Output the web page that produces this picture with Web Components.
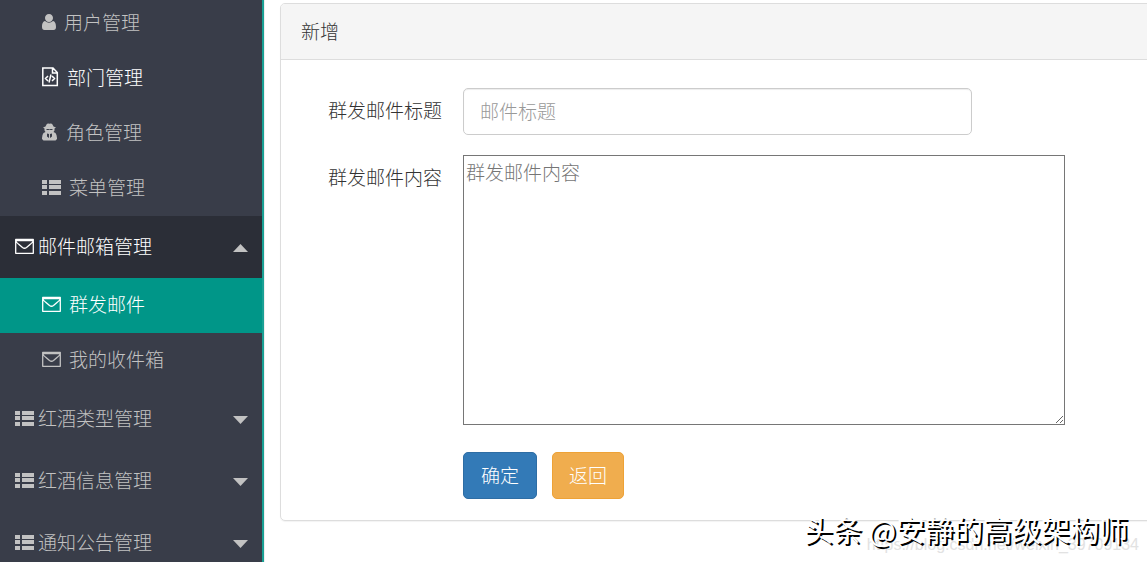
<!DOCTYPE html>
<html lang="zh-CN">
<head>
<meta charset="utf-8">
<title>群发邮件 - 新增</title>
<style>
html, body { margin: 0; height: 100%; }
body { overflow: hidden; background: #fff; color: #333; font: 300 19px/28px "Noto Sans CJK SC", "Liberation Sans", sans-serif; }
</style>
</head>
<body>
<admin-layout>
  <side-nav slot="nav">
    <nav-item icon="user" level="2">用户管理</nav-item>
    <nav-item icon="code" level="2" class="hover">部门管理</nav-item>
    <nav-item icon="secret" level="2">角色管理</nav-item>
    <nav-item icon="list" level="2">菜单管理</nav-item>
    <nav-item icon="mail" arrow="up" class="open">邮件邮箱管理</nav-item>
    <nav-item icon="mail" level="2" class="active">群发邮件</nav-item>
    <nav-item icon="mail" level="2">我的收件箱</nav-item>
    <nav-item icon="list" arrow="down">红酒类型管理</nav-item>
    <nav-item icon="list" arrow="down">红酒信息管理</nav-item>
    <nav-item icon="list" arrow="down">通知公告管理</nav-item>
  </side-nav>
  <panel-card>
    <span slot="title">新增</span>
    <mail-form></mail-form>
  </panel-card>
  <page-mark slot="mark"><span slot="url">https://blog.csdn.net/weixin_39709134</span>头条 @安静的高级架构师</page-mark>
</admin-layout>
<script>
const define = (name, html, setup) => customElements.define(name, class extends HTMLElement {
  constructor() {
    super();
    this.attachShadow({ mode: 'open' }).innerHTML = html;
  }
  connectedCallback() { if (setup) setup(this, this.shadowRoot); }
});

define('admin-layout', `
<style>
:host { display: flex; position: relative; height: 100vh; overflow: hidden; }
aside { flex: none; width: 262px; background: #393d49; border-right: 2px solid #1aa094; overflow: hidden; }
main { flex: 1; min-width: 0; box-sizing: border-box; padding: 3px 0 0 15px; border-left: 1px solid #eee; }
</style>
<aside><slot name="nav"></slot></aside>
<main><slot></slot></main>
<slot name="mark"></slot>`);

define('side-nav', `
<style>
:host { display: block; }
nav { display: flex; flex-direction: column; margin-top: -4px; }
</style>
<nav><slot></slot></nav>`);

const icons = {
  user: [14, 18, '<path fill="currentColor" d="M7 1C9.500 1 11 2.800 11 5C11 7.200 9.400 9 7 9C4.600 9 3 7.200 3 5C3 2.800 4.500 1 7 1ZM3 8Q7 11.500 11 8C13.400 8.500 14 11.300 14 14Q14 17 11.500 17H2.500Q0 17 0 14C0 11.300 .6 8.500 3 8Z"/>'],
  code: [17, 20, '<path fill="none" stroke="currentColor" stroke-width="1.500" d="M.8 1H11L15.300 5.500V18.500H.8ZM10.500 1V6H15.300M6 9L3.500 11.500L6 14M10 9L12.500 11.500L10 14M9 7.500L7 15.500"/>'],
  secret: [16, 18, '<path fill="currentColor" fill-rule="evenodd" d="M3.500 3.500L4.500 1.500Q5.500 0 7.500 .8Q9.500 0 10.500 1.500L11.500 3.500L14 4.500L12.500 5.500V7.500L11.500 9L13.500 10Q15 12 15 15V16L13.500 17.500H1.500L0 16V15Q0 12 1.500 10L3.500 9L2.500 7.500V5.500L1 4.500ZM4.500 6V7H6.500L7.500 6.500L8.500 7H10.500V6ZM5 10.500V13.500L7 15V11ZM8 11V15L10 13.500V10.500Z"/>'],
  list: [19, 16, '<path fill="currentColor" d="M0 1H5V5H0ZM7 1H19V5H7ZM0 6H5V10H0ZM7 6H19V10H7ZM0 12H5V16H0ZM7 12H19V16H7Z"/>'],
  mail: [19, 16, '<path fill="none" stroke="currentColor" stroke-width="1.300" stroke-linejoin="round" d="M.7 1.500H18.300V15.300H.7ZM.7 2.500H18.300M1 3.500Q2 5 4 6.500L7.500 9.500Q9.500 11 11.500 9.500L15 6.500Q17.500 4.500 18 3.500"/>']
};

define('nav-item', `
<style>
:host { display: block; flex: none; color: #c2c2c2; }
:host(.hover), :host(.open), :host(.active) { color: #fff; }
:host(.open) { background: #2b2e37; }
:host(.active) { background: #009688; }
a { display: flex; align-items: center; box-sizing: border-box; height: 62px; padding: 0 14px 3px 15px; gap: 4px; color: inherit; text-decoration: none; }
:host([level="2"]) a { height: 55px; padding: 0 14px 3px 42px; gap: 8px; }
.icon { display: flex; }
.label { flex: 1; }
.arrow { display: none; width: 15px; height: 8px; fill: #c2c2c2; margin-top: 4px; }
:host([arrow]) .arrow { display: block; }
:host([arrow="up"]) .arrow { transform: rotate(180deg); }
svg { flex: none; }
</style>
<a href="#"><span class="icon"></span><span class="label"><slot></slot></span>
<svg class="arrow" viewBox="0 0 15 8" aria-hidden="true"><path d="M0 0H15L7.500 8Z"/></svg></a>`, (host, root) => {
  const [w, h, body] = icons[host.getAttribute('icon')];
  root.querySelector('.icon').innerHTML = `<svg width="${w}" height="${h}" viewBox="0 0 ${w} ${h}" aria-hidden="true">${body}</svg>`;
});

define('panel-card', `
<style>
:host { display: block; margin-right: -8px; border: 1px solid #ddd; border-radius: 5px; box-shadow: 0 1px 1px rgba(0,0,0,.05); overflow: hidden; }
header { padding: 13px 20px 14px; background: #f5f5f5; border-bottom: 1px solid #ddd; }
section { padding: 28px 20px 21px; }
</style>
<header><slot name="title"></slot></header>
<section><slot></slot></section>`);

define('mail-form', `
<style>
:host { display: block; }
form { display: grid; grid-template-columns: 141px minmax(0, 602px); column-gap: 21px; row-gap: 20px; }
label { text-align: right; padding-top: 8px; }
input, textarea, button { box-sizing: border-box; font: inherit; margin: 0; }
input { width: 509px; max-width: 100%; height: 47px; padding: 0 16px 2px; border: 1px solid #ccc; border-radius: 5px; box-shadow: inset 0 1px 1px rgba(0,0,0,.075); }
input::placeholder { color: #999; }
textarea { display: block; width: 100%; height: 270px; padding: 2px; border: 1px solid #767676; resize: both; }
textarea::placeholder { color: #757575; }
.actions { grid-column: 2; display: flex; gap: 15px; padding-top: 7px; }
button { height: 47px; padding: 0 17px 2px; border: 1px solid #2e6da4; border-radius: 5px; background: #337ab7; color: #fff; }
button.back { padding: 0 16px 2px; border-color: #eea236; background: #f0ad4e; }
</style>
<form>
<label for="title">群发邮件标题</label><input id="title" placeholder="邮件标题">
<label for="content">群发邮件内容</label><textarea id="content" placeholder="群发邮件内容"></textarea>
<div class="actions"><button type="submit">确定</button><button type="button" class="back">返回</button></div>
</form>`);

define('page-mark', `
<style>
:host { position: absolute; right: 19px; bottom: 12px; font-size: 29px; line-height: 42px; font-weight: 400; white-space: nowrap; color: #fff; text-shadow: 2px 2px 0 #000; pointer-events: none; }
.url { position: absolute; right: -11px; bottom: -7px; font: 16px/24px "Liberation Sans", sans-serif; color: #e2e2e2; text-shadow: none; }
.text { position: relative; }
</style>
<span class="url"><slot name="url"></slot></span><span class="text"><slot></slot></span>`);
</script>
</body>
</html>
